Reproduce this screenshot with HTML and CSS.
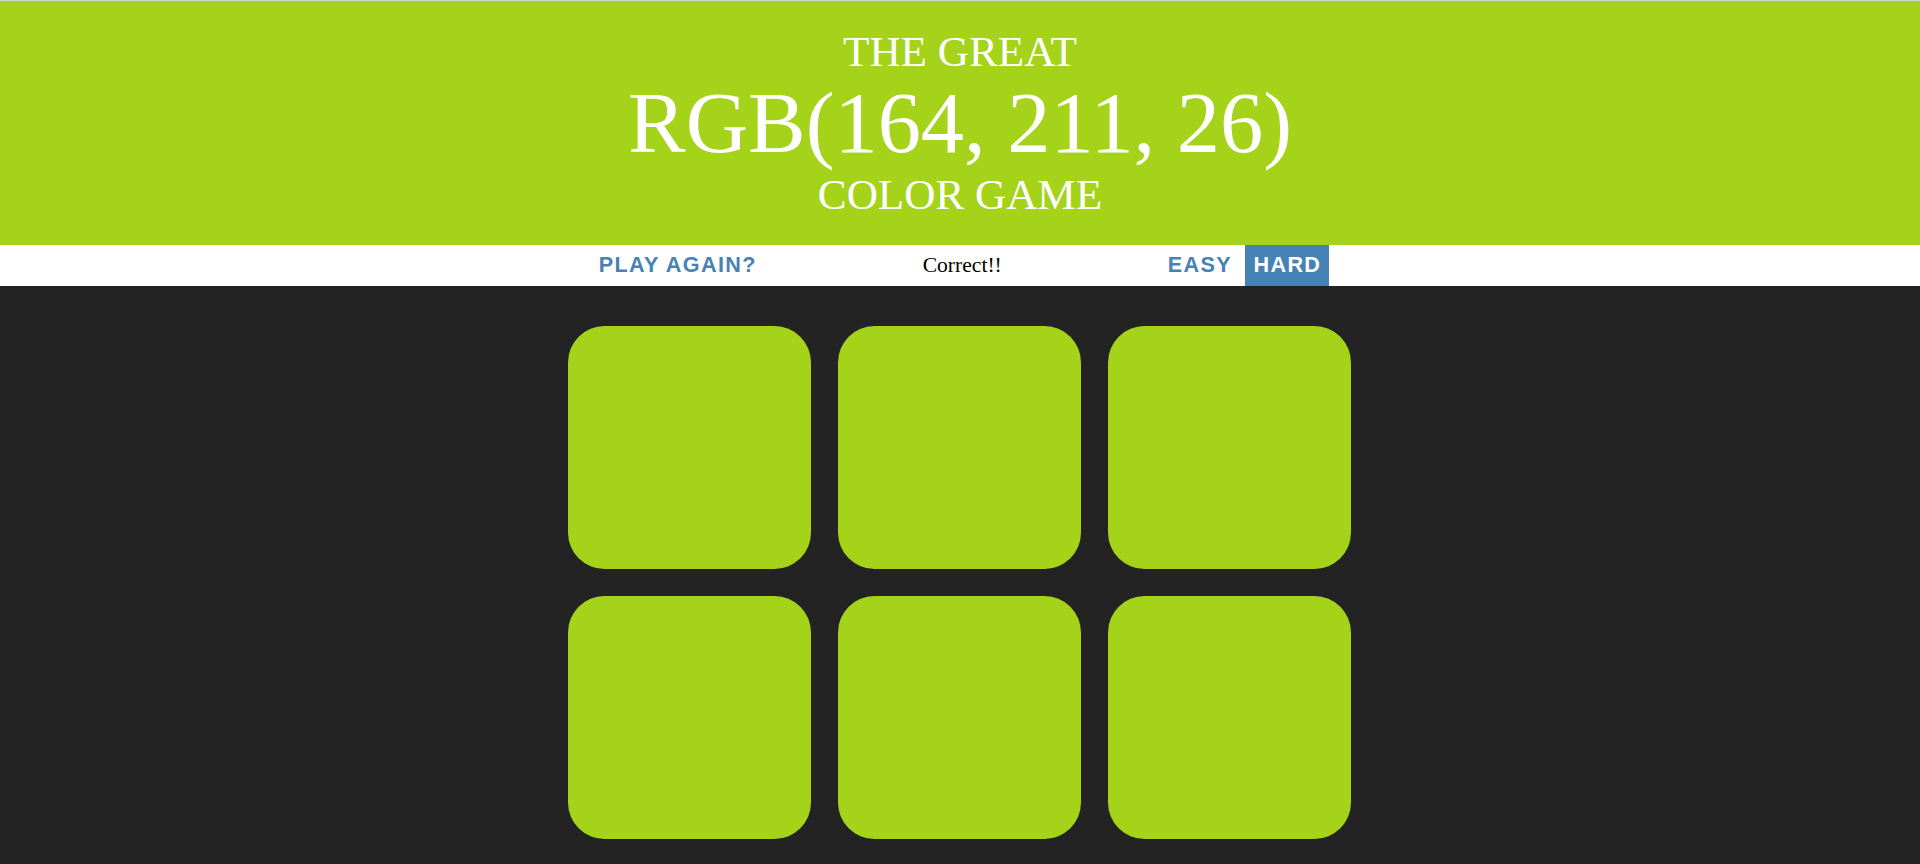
FILE: index.html
```html
<!DOCTYPE html>
<html lang="en">
<head>
<meta charset="utf-8">
<title>Color Game</title>
<link rel="stylesheet" href="styles.css">
</head>
<body>
<h1 class="title">The great<br><span class="color-display">RGB(164, 211, 26)</span><br>Color game</h1>
<div class="stripe">
  <button class="btn">Play Again?</button>
  <span class="message">Correct!!</span>
  <button class="btn">Easy</button>
  <button class="btn selected">Hard</button>
</div>
<div class="container">
  <div class="square"></div>
  <div class="square"></div>
  <div class="square"></div>
  <div class="square"></div>
  <div class="square"></div>
  <div class="square"></div>
</div>
</body>
</html>
```

FILE: styles.css
```css
html, body {
  margin: 0;
  padding: 0;
}
body {
  background: #232323;
  border-top: 1px solid #d3d3d3;
  font-family: "Liberation Serif", "Times New Roman", serif;
  font-size: 21.6px;
}
.title {
  margin: 0;
  padding: 27px 0;
  background: rgb(164, 211, 26);
  color: #fff;
  text-align: center;
  text-transform: uppercase;
  font-weight: normal;
  font-size: 43.2px;
  line-height: 1.1;
}
.color-display {
  font-size: 200%;
}
.stripe {
  background: #fff;
  height: 40.5px;
  text-align: center;
}
.btn {
  border: none;
  background: none;
  text-transform: uppercase;
  height: 100%;
  font-family: "Liberation Sans", Arial, sans-serif;
  font-weight: 700;
  font-size: inherit;
  color: steelblue;
  letter-spacing: 1.35px;
  padding: 1.35px 8.1px;
  margin: 0;
  outline: none;
}
.selected {
  color: #fff;
  background: steelblue;
}
.message {
  display: inline-block;
  width: 20%;
  color: #000;
}
.container {
  max-width: 810px;
  margin: 27px auto;
  display: flex;
  flex-wrap: wrap;
}
.square {
  width: 30%;
  aspect-ratio: 1 / 1;
  margin: 1.66%;
  background: rgb(164, 211, 26);
  border-radius: 15%;
}
```
